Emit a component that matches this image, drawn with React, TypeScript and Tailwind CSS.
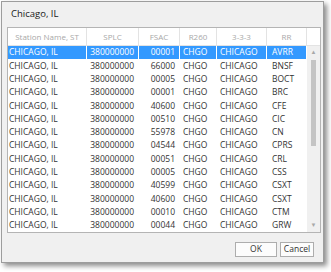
const rows: [string, string][] = [
  ["00001", "AVRR"],
  ["66000", "BNSF"],
  ["00005", "BOCT"],
  ["00001", "BRC"],
  ["40600", "CFE"],
  ["00510", "CIC"],
  ["55978", "CN"],
  ["04544", "CPRS"],
  ["00051", "CRL"],
  ["00005", "CSS"],
  ["40599", "CSXT"],
  ["40600", "CSXT"],
  ["00010", "CTM"],
  ["00044", "GRW"],
];

const headers = [
  { label: "Station Name, ST", w: "w-[79px]" },
  { label: "SPLC", w: "w-[52px]" },
  { label: "FSAC", w: "w-[41px]" },
  { label: "R260", w: "w-[37px]" },
  { label: "3-3-3", w: "w-[50px]" },
  { label: "RR", w: "w-[40px]" },
];

export default function App() {
  return (
    <div className="w-[331px] h-[272px] bg-white overflow-hidden font-['Open_Sans',sans-serif]">
      <div className="ml-[1px] mt-[1px] w-[323px] h-[262px] border border-[#9d9d9d] bg-[#f0f0f0] shadow-[3px_3px_5px_rgba(0,0,0,0.45)] flex flex-col">
        <div className="h-[25px] pl-[9px] flex items-center text-[9.5px] text-[#1a1a1a]">
          Chicago, IL
        </div>

        <div className="ml-[5px] w-[314px] border border-[#b4b4b4] bg-white">
          <div className="flex h-[18px] border-b border-[#e3e3e3]">
            {headers.map((h) => (
              <div
                key={h.label}
                className={`${h.w} flex items-center justify-center border-r border-[#e3e3e3] text-[8px] text-[#a8a8a8]`}
              >
                {h.label}
              </div>
            ))}
            <div className="flex-1" />
          </div>

          <div className="flex">
            <div className="w-[299px]">
              {rows.map(([fsac, rr], i) => {
                const sel = i === 0;
                const cell = `h-full flex items-center border-r ${
                  sel ? "border-white" : "border-transparent"
                }`;
                return (
                  <div
                    key={i}
                    className={`flex h-[13.3px] text-[8.5px] leading-none ${
                      sel ? "bg-[#3399ff] text-white" : "text-[#333333]"
                    }`}
                  >
                    <div className={`${cell} w-[79px] pl-[1px]`}>CHICAGO, IL</div>
                    <div className={`${cell} w-[52px] justify-end pr-[4px]`}>380000000</div>
                    <div className={`${cell} w-[41px] justify-end pr-[4px]`}>{fsac}</div>
                    <div className={`${cell} w-[37px] pl-[3px]`}>CHGO</div>
                    <div className={`${cell} w-[50px] pl-[3px]`}>CHICAGO</div>
                    <div className={`${cell} w-[40px] pl-[5px]`}>{rr}</div>
                  </div>
                );
              })}
            </div>

            <div className="w-[13px] bg-[#f0f0f0] flex flex-col items-center">
              <div className="h-[13px] flex items-center justify-center text-[6px] text-[#a8a8a8]">
                ▲
              </div>
              <div className="mt-[1px] w-[5px] h-[86px] bg-[#c4c4c4]" />
              <div className="flex-1" />
              <div className="h-[13px] flex items-center justify-center text-[6px] text-[#a8a8a8]">
                ▼
              </div>
            </div>
          </div>
        </div>

        <div className="flex justify-end gap-[3px] pr-[9px] mt-[9px]">
          <button className="w-[42px] h-[15px] border border-[#adadad] bg-[#fcfcfc] text-[8.5px] text-[#333333] flex items-center justify-center">
            OK
          </button>
          <button className="w-[34px] h-[15px] border border-[#adadad] bg-[#fcfcfc] text-[8.5px] text-[#333333] flex items-center justify-center">
            Cancel
          </button>
        </div>
      </div>
    </div>
  );
}
